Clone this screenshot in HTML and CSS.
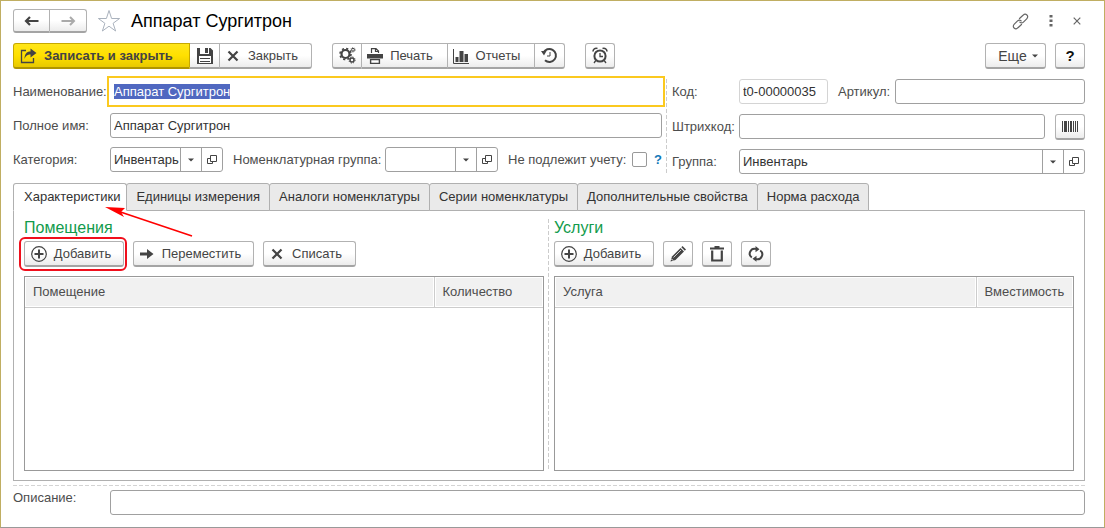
FILE: index.html
```
<!DOCTYPE html>
<html lang="ru">
<head>
<meta charset="utf-8">
<title>Аппарат Сургитрон</title>
<link rel="stylesheet" href="styles.css">
<script src="app.js" defer></script>
</head>
<body>
<svg class="sprite" aria-hidden="true">
  <symbol id="i-plus" viewBox="0 0 16 16"><circle cx="8" cy="8" r="7.3" fill="none" stroke="currentColor" stroke-width="1.2"/><path d="M8 3.500v9M3.500 8h9" stroke="currentColor" stroke-width="2"/></symbol>
  <symbol id="i-cross" viewBox="0 0 16 16"><path d="M3.500 3.500l9 9M12.500 3.500l-9 9" stroke="currentColor" stroke-width="2.200"/></symbol>
  <symbol id="i-drop" viewBox="0 0 8 8"><path d="M1 2.500h6L4 5.500z" fill="currentColor"/></symbol>
  <symbol id="i-open" viewBox="0 0 12 12"><path d="M4.500 1.500h6v6h-6zM4.500 4.500h-3v5h5v-2" fill="none" stroke="currentColor"/></symbol>
</svg>
<main class="window">
  <header class="titlebar">
    <div class="group">
      <button class="btn nav" aria-label="Назад"><svg width="16" height="12" viewBox="0 0 16 12"><path d="M2 6h12.500M6 2L2 6l4 4" fill="none" stroke="currentColor" stroke-width="2.200"/></svg></button>
      <button class="btn nav nav-off" aria-label="Вперед"><svg width="16" height="12" viewBox="0 0 16 12"><path d="M1.500 6H14M10 2l4 4-4 4" fill="none" stroke="currentColor" stroke-width="2"/></svg></button>
    </div>
    <button class="plain star" aria-label="Избранное"><svg width="24" height="24" viewBox="0 0 24 24"><path d="M12 1.500l2.600 8h8l-6.500 4.800 2.500 7.700-6.600-4.800L5.400 22l2.500-7.700L1.400 9.500h8z" fill="none" stroke="currentColor"/></svg></button>
    <h1 class="title">Аппарат Сургитрон</h1>
    <div class="tools">
      <button class="plain" aria-label="Ссылка"><svg width="17" height="17" viewBox="0 0 17 17"><g fill="none" stroke="currentColor" stroke-width="1.200" stroke-linecap="round"><path d="M7.500 5.500L11 2.300c1.300-1.300 2.800-1.300 3.900-.3s1.100 2.600-.2 3.900l-3 3c-1.300 1.300-2.800 1.300-3.900.2"/><path d="M9.500 11.500l-3.500 3.200c-1.300 1.300-2.800 1.300-3.900.3s-1.100-2.600.2-3.900l3-3c1.300-1.300 2.800-1.300 3.900-.2"/></g></svg></button>
      <button class="plain" aria-label="Меню"><svg width="4" height="12" viewBox="0 0 4 12"><path d="M.5 0h3v2.600h-3zM.5 4.500h3v2.600h-3zM.5 9h3v2.600h-3z" fill="currentColor"/></svg></button>
      <button class="plain" aria-label="Закрыть окно"><svg width="8" height="8" viewBox="0 0 8 8"><path d="M.7.7l6.600 6.600M7.300.7L.7 7.300" stroke="currentColor" stroke-width="1.200"/></svg></button>
    </div>
  </header>

  <div class="commands">
    <div class="group">
      <button class="btn primary"><svg width="18" height="16" viewBox="0 0 18 16"><path d="M6 2.500H1.500v12h12V10" fill="none" stroke="currentColor" stroke-width="1.300"/><path d="M4.500 11C4.500 6 6.500 3.500 10.500 3.500V.5L16.500 5l-6 4.500v-3c-3 0-4.500 1-6 4.500z" fill="currentColor"/></svg>Записать и закрыть</button>
      <button class="btn square" aria-label="Записать"><svg width="16" height="16" viewBox="0 0 16 16"><path d="M0 0h3v6h9V0h1.500L16 2.500V16H0z" fill="currentColor"/><path d="M8 0h3v5H8z" fill="currentColor"/><path d="M2 8h12v7H2z" fill="#fff"/><path d="M3 10.500h10M3 13.500h10" stroke="currentColor"/></svg></button>
      <button class="btn close save-close"><svg width="16" height="16"><use href="#i-cross"/></svg>Закрыть</button>
    </div>
    <div class="group">
      <button class="btn square" aria-label="Настройки"><svg width="17" height="17" viewBox="0 0 17 17"><g fill="none" stroke="currentColor"><circle cx="6.500" cy="7" r="4" stroke-width="2.200"/><circle cx="6.500" cy="7" r="5.500" stroke-width="1.600" stroke-dasharray="2.160 2.160"/><circle cx="14" cy="2.800" r="1.400"/><circle cx="14" cy="2.800" r="2.200" stroke-dasharray=".86 .86" stroke-width=".8"/><circle cx="13" cy="13" r="2" stroke-width="1.500"/><circle cx="13" cy="13" r="3.100" stroke-dasharray="1.220 1.220"/></g></svg></button>
      <button class="btn wide"><svg width="16" height="16" viewBox="0 0 16 16"><path d="M4.500 5V.7H9L11.500 3v2M8.500 1v2.500h3" fill="none" stroke="currentColor" stroke-width="1.200"/><path d="M0 6h16v4.500H0z" fill="currentColor"/><path d="M3.600 11.600h8.800v3.800H3.600z" fill="#fff" stroke="currentColor" stroke-width="1.400"/></svg>Печать</button>
      <button class="btn wide"><svg width="16" height="16" viewBox="0 0 16 16"><path d="M.5 1v14.500H16" fill="none" stroke="currentColor"/><path d="M2.500 9h3v5h-3zM6.500 3h4v11h-4zM11.500 6H15v8h-3.500z" fill="currentColor"/></svg>Отчеты</button>
      <button class="btn square" aria-label="История"><svg width="17" height="17" viewBox="0 0 17 17"><path d="M2.400 6A6.500 6.500 0 1 1 4 13.200" fill="none" stroke="currentColor" stroke-width="2"/><path d="M0 4h5.500L3 8.500z" fill="currentColor"/><path d="M9 5v4H6" fill="none" stroke="currentColor"/></svg></button>
    </div>
    <button class="btn square" aria-label="Напоминание"><svg width="16" height="17" viewBox="0 0 16 17"><circle cx="8" cy="9" r="5.600" fill="none" stroke="currentColor" stroke-width="2"/><path d="M8 6v3.500h3M3.800 13.500L2 16M12.200 13.500L14 16" fill="none" stroke="currentColor" stroke-width="1.300"/><path d="M1 4.500C1 2 3 .8 5.500 1.500M15 4.500c0-2.500-2-3.700-4.500-3" fill="none" stroke="currentColor" stroke-width="1.600"/></svg></button>
    <div class="commands-end">
      <button class="btn more">Еще<svg width="8" height="8"><use href="#i-drop"/></svg></button>
      <button class="btn square help">?</button>
    </div>
  </div>

  <form class="form">
    <div class="col-left">
      <div class="row"><label class="label" for="name">Наименование:</label><input class="input focused" id="name" value="Аппарат Сургитрон"></div>
      <div class="row"><label class="label" for="full">Полное имя:</label><input class="input" id="full" value="Аппарат Сургитрон"></div>
      <div class="row">
        <label class="label" for="cat">Категория:</label>
        <div class="combo"><input class="combo-text" id="cat" value="Инвентарь"><button type="button" class="combo-btn" aria-label="Выбрать категорию"><svg width="8" height="8"><use href="#i-drop"/></svg></button><button type="button" class="combo-btn" aria-label="Открыть категорию"><svg width="12" height="12"><use href="#i-open"/></svg></button></div>
        <label class="inline-label group-label" for="nomgroup">Номенклатурная группа:</label>
        <div class="combo"><input class="combo-text" id="nomgroup"><button type="button" class="combo-btn" aria-label="Выбрать группу"><svg width="8" height="8"><use href="#i-drop"/></svg></button><button type="button" class="combo-btn" aria-label="Открыть группу"><svg width="12" height="12"><use href="#i-open"/></svg></button></div>
        <label class="inline-label check-label" for="skip">Не подлежит учету:</label>
        <input type="checkbox" class="check" id="skip"><a class="hint" href="#">?</a>
      </div>
    </div>
    <div class="col-right">
      <div class="row"><label class="label" for="code">Код:</label><input class="input code" id="code" value="t0-00000035" readonly><label class="inline-label art-label" for="art">Артикул:</label><input class="input" id="art"></div>
      <div class="row"><label class="label" for="bar">Штрихкод:</label><input class="input" id="bar"><button type="button" class="btn square barcode" aria-label="Сканировать"><svg width="17" height="11" viewBox="0 0 17 11"><path d="M0 0h1v11H0zM2 0h3v11H2zM6 0h1v11H6zM8 0h2v11H8zM11 0h1v11h-1zM13 0h1v11h-1zM15 0h1v11h-1z" fill="currentColor"/></svg></button></div>
      <div class="row"><label class="label" for="grp">Группа:</label><div class="combo combo-fill"><input class="combo-text" id="grp" value="Инвентарь"><button type="button" class="combo-btn" aria-label="Выбрать"><svg width="8" height="8"><use href="#i-drop"/></svg></button><button type="button" class="combo-btn" aria-label="Открыть"><svg width="12" height="12"><use href="#i-open"/></svg></button></div></div>
    </div>
  </form>

  <nav class="tabs" role="tablist">
    <button class="tab active" role="tab" aria-selected="true">Характеристики<svg class="pointer" width="90" height="34" viewBox="0 0 90 34" aria-hidden="true"><path d="M87 29L14 4.500" stroke="#f00" stroke-width="1.600"/><path d="M0 0l20 1-4 4 3 5z" fill="#f00"/></svg></button>
    <button class="tab" role="tab">Единицы измерения</button>
    <button class="tab" role="tab">Аналоги номенклатуры</button>
    <button class="tab" role="tab">Серии номенклатуры</button>
    <button class="tab" role="tab">Дополнительные свойства</button>
    <button class="tab" role="tab">Норма расхода</button>
  </nav>

  <div class="panel">
    <section class="pane">
      <h2 class="pane-title">Помещения</h2>
      <div class="pane-tools">
        <button class="btn add marked"><svg width="16" height="16"><use href="#i-plus"/></svg>Добавить</button>
        <button class="btn move"><svg width="14" height="16" viewBox="0 0 14 16"><path d="M0 6.500h7V3l6.500 5L7 13V9.500H0z" fill="currentColor"/></svg>Переместить</button>
        <button class="btn close"><svg width="16" height="16"><use href="#i-cross"/></svg>Списать</button>
      </div>
      <div class="grid-box"><table class="grid"><thead><tr><th>Помещение</th><th class="count">Количество</th></tr></thead></table></div>
    </section>
    <section class="pane pane-second">
      <h2 class="pane-title">Услуги</h2>
      <div class="pane-tools">
        <button class="btn add"><svg width="16" height="16"><use href="#i-plus"/></svg>Добавить</button>
        <button class="btn square" aria-label="Изменить"><svg width="16" height="16" viewBox="0 0 16 16"><path d="M2 10.500L10.500 2 14 5.500 5.500 14 .5 15.500z" fill="currentColor"/><path d="M11.300 1.200L12.500 0 16 3.500l-1.200 1.200z" fill="currentColor"/><path d="M3.500 11.500L11 4" stroke="#ccc"/><path d="M1.500 13l1.500 1.500" stroke="#fff"/></svg></button>
        <button class="btn square" aria-label="Удалить"><svg width="14" height="16" viewBox="0 0 14 16"><path d="M0 1.500h14v2H0zM4.500 0h5v2h-5z" fill="currentColor"/><path d="M2.200 4.500v10h9.600v-10" fill="none" stroke="currentColor" stroke-width="2.200"/></svg></button>
        <button class="btn square" aria-label="Обновить"><svg width="16" height="16" viewBox="0 0 16 16"><path d="M3.800 11.500A4.800 4.800 0 0 1 8 3M12.200 4.500A4.800 4.800 0 0 1 8 13" fill="none" stroke="currentColor" stroke-width="2"/><path d="M7.500 0l4 3.200-4 3zM8.500 9.800v6l-4-3z" fill="currentColor"/></svg></button>
      </div>
      <div class="grid-box"><table class="grid"><thead><tr><th>Услуга</th><th class="capacity">Вместимость</th></tr></thead></table></div>
    </section>
  </div>

  <footer class="footer row"><label class="label" for="desc">Описание:</label><input class="input" id="desc"></footer>
</main>
</body>
</html>
```
FILE: styles.css
```
* { box-sizing: border-box; }
body { margin: 0; background: #fff; color: #404040; font: 13px/16px "Liberation Sans", Arial, sans-serif; }
button, input { font: inherit; color: inherit; }
button { padding: 0; }
svg { display: block; flex: none; }
.sprite { position: absolute; width: 0; height: 0; }

.window {
  display: flex; flex-direction: column; min-height: 100vh;
  padding: 8px 19px 12px 12px;
  border: 1px solid #c0ae62; border-bottom-color: #999;
}

.btn {
  display: flex; align-items: center; justify-content: center;
  height: 26px; border: 1px solid #b2b2b2; border-bottom: 2px solid #a4a4a4; border-radius: 3px;
  background: linear-gradient(#fff 50%, #ececec); color: #444; white-space: nowrap;
}
.square { width: 30px; }
.group { display: flex; }
.group .btn + .btn { border-left: 0; border-top-left-radius: 0; border-bottom-left-radius: 0; }
.group .btn:not(:last-child) { border-top-right-radius: 0; border-bottom-right-radius: 0; }
.plain { border: 0; background: none; color: #666; }

.titlebar { display: flex; align-items: center; height: 24px; }
.nav { width: 37px; height: 24px; }
.nav-off { color: #aaa; }
.star { margin: 0 10px; color: #aab2bd; }
.title { margin: 0; font-size: 18px; line-height: 24px; font-weight: 400; color: #000; }
.tools { display: flex; align-items: center; gap: 20px; margin-left: auto; padding-right: 4px; }

.commands { display: flex; gap: 20px; margin-top: 10px; }
.commands-end { display: flex; gap: 9px; margin-left: auto; }
.primary {
  justify-content: flex-start; width: 177px; gap: 6px; padding-left: 6px; font-weight: 700; color: #444;
  border-color: #c6a800 #c6a800 #b09500; background: linear-gradient(#ffe61a, #ffe000 50%, #e8c900);
}
.close { width: 93px; gap: 7px; padding-right: 8px; }
.save-close { width: 92px; }
.wide { width: 86px; gap: 7px; padding-right: 9px; }
.wide + .wide { width: 87px; }
.more { width: 61px; gap: 4px; padding-left: 6px; font-size: 14px; }
.help { font-size: 15px; font-weight: 700; color: #111; }

.form { display: grid; grid-template-columns: 649fr 423fr; margin-top: 10px; }
.col-left { display: flex; flex-direction: column; gap: 9px; }
.col-right {
  display: flex; flex-direction: column; gap: 10px; margin-left: 4px; padding-left: 6px;
  background: repeating-linear-gradient(#ccc 0 4px, transparent 4px 6px) left / 1px 100% no-repeat;
}
.row { display: flex; align-items: center; }
.form .row { height: 25px; }
.label { flex: none; width: 97px; color: #4d4d4d; }
.col-right .label { width: 67px; }
.inline-label { flex: none; color: #4d4d4d; }
.input { flex: 1; min-width: 0; height: 25px; padding: 0 3px; border: 1px solid #a0a0a0; border-radius: 3px; background: #fff; color: #333; }
.focused { border-color: transparent; outline: 2px solid #fbc91f; outline-offset: 1px; border-radius: 0; }
.focused::selection { background: #5068c0; color: #fff; }
.code { flex: none; width: 89px; border-color: #d4d4d4; }
.art-label { width: 67px; padding-left: 10px; }
.barcode { margin-left: 10px; }
.combo { display: flex; flex: none; width: 113px; height: 25px; border: 1px solid #a0a0a0; border-radius: 3px; background: #fff; }
.combo-fill { flex: 1; width: auto; }
.combo-text { flex: 1; min-width: 0; padding: 0 0 0 3px; border: 0; background: none; color: #333; }
.combo-btn { display: flex; align-items: center; justify-content: center; width: 21px; border: 0; border-left: 1px solid #a0a0a0; background: none; color: #444; }
.group-label { width: 162px; padding-left: 10px; }
.check-label { width: 134px; padding-left: 10px; }
.check { appearance: none; flex: none; width: 15px; height: 15px; margin: 0 7px 0 0; border: 1px solid #999; border-radius: 2px; }
.hint { color: #1278b8; font-weight: 700; text-decoration: none; }

.tabs { display: flex; margin-top: 9px; }
.tab {
  position: relative; height: 28px; margin: 0 0 -1px -1px; padding: 0 9px;
  border: 1px solid #b0b0b0; border-radius: 3px 3px 0 0; background: #eaeaea; color: #333; white-space: nowrap;
}
.tab:first-child { margin-left: 0; padding: 0 6px 0 10px; }
.active { z-index: 1; background: #fff; border-bottom-color: #fff; }
.pointer { position: absolute; left: 91px; top: 23px; }

.panel { display: grid; grid-template-columns: 1fr 1fr; gap: 10px; flex: 1; padding: 8px 10px 9px; border: 1px solid #b0b0b0; }
.pane { position: relative; display: flex; flex-direction: column; min-width: 0; }
.pane-second::before {
  content: ""; position: absolute; left: -6px; top: 0; bottom: 0; width: 1px;
  background: repeating-linear-gradient(#ccc 0 4px, transparent 4px 6px);
}
.pane-title { margin: 0; font-size: 16px; line-height: 18px; font-weight: 400; color: #129b4c; }
.pane-tools { display: flex; gap: 9px; margin: 4px 0 9px; }
.add { position: relative; width: 100px; gap: 7px; padding-right: 6px; }
.marked::after { content: ""; position: absolute; inset: -5px -4px -6px -6px; border: 2px solid #f00f1c; border-radius: 6px; }
.move { width: 121px; gap: 8px; padding-right: 6px; }
.grid-box { flex: 1; border: 1px solid #999; }
.grid { width: 100%; border-collapse: collapse; table-layout: fixed; }
.grid th { height: 30px; padding: 0 8px; border: 1px solid #ccc; border-width: 0 0 1px; background: #f1f1f1; box-shadow: inset 0 0 0 1px #fff; font-weight: 400; text-align: left; color: #4d4d4d; }
.grid th + th { border-left-width: 1px; }
.count { width: 109px; }
.capacity { width: 97px; }

.footer {
  align-items: flex-start; margin-top: 4px; padding-top: 5px;
  background: repeating-linear-gradient(90deg, #d4d4d4 0 4px, transparent 4px 6px) top / 100% 1px no-repeat;
}
```
FILE: app.js
```
const nameField = document.getElementById("name");
nameField.focus();
nameField.select();
```
